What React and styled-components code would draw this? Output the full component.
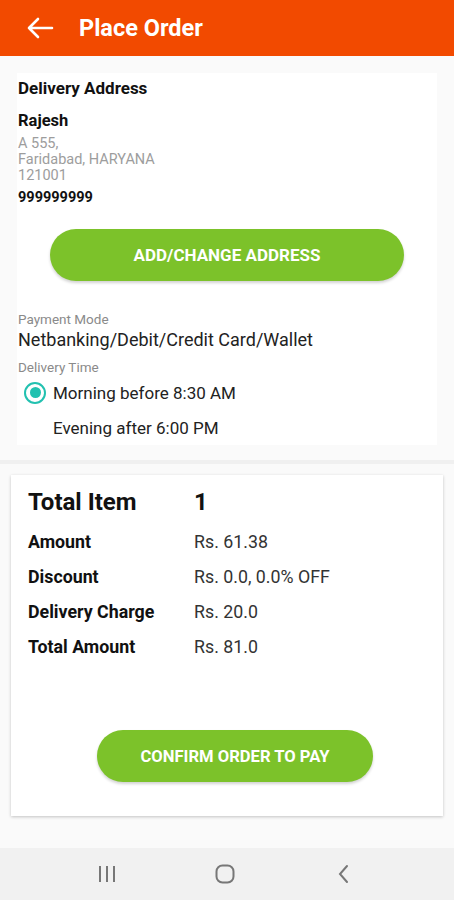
import styled, { createGlobalStyle } from "styled-components";

const Global = createGlobalStyle`
  html, body {
    margin: 0;
    padding: 0;
    background: #fafafa;
    font-family: Roboto, "Liberation Sans", sans-serif;
  }
  * { box-sizing: border-box; }
`;

const Screen = styled.div`
  width: 454px;
  height: 900px;
  display: flex;
  flex-direction: column;
  background: #fafafa;
  overflow: hidden;
`;

const Header = styled.div`
  height: 56px;
  flex-shrink: 0;
  background: #f24a00;
  display: flex;
  align-items: center;
  padding-left: 26px;
  gap: 25px;

  h1 {
    margin: 0;
    color: #fff;
    font-size: 23.5px;
    font-weight: 700;
  }
`;

const AddressSection = styled.div`
  padding: 17px 17px 15px 17px;
  background: #fafafa;
`;

const AddressCard = styled.div`
  background: #fff;
  height: 372px;
  padding: 5px 1px 0 1px;
  display: flex;
  flex-direction: column;
`;

const Heading = styled.div`
  font-size: 17px;
  font-weight: 700;
  color: #111;
  line-height: 20px;
`;

const Name = styled.div`
  font-size: 16.5px;
  font-weight: 700;
  color: #111;
  margin-top: 13px;
  line-height: 20px;
`;

const AddressLines = styled.div`
  margin-top: 5px;
  font-size: 14.5px;
  color: #9d9d9d;
  line-height: 16px;
`;

const Phone = styled.div`
  font-size: 14.5px;
  font-weight: 700;
  color: #111;
  line-height: 18px;
  margin-top: 5px;
`;

const PillButton = styled.button`
  display: block;
  flex-shrink: 0;
  align-self: center;
  width: ${(p) => p.$width}px;
  height: 52px;
  border: none;
  border-radius: 26px;
  background: #7cc22a;
  color: #fff;
  font-family: Roboto, "Liberation Sans", sans-serif;
  font-size: ${(p) => p.$size}px;
  font-weight: 700;
  box-shadow: 0 2px 3px rgba(0, 0, 0, 0.18);
  margin: ${(p) => p.$margin};
`;

const SmallLabel = styled.div`
  font-size: 13.5px;
  color: #8a8a8a;
  line-height: 16px;
  margin-top: ${(p) => p.$top || 0}px;
`;

const PaymentValue = styled.div`
  font-size: 18px;
  color: #222;
  line-height: 22px;
  margin-top: 2px;
`;

const RadioRow = styled.div`
  display: flex;
  align-items: center;
  height: 36px;
  padding-left: 6px;
  gap: 7px;
  font-size: 17px;
  color: #222;
`;

const Radio = styled.span`
  width: 22px;
  height: 22px;
  border-radius: 50%;
  border: 2.5px solid ${(p) => (p.$checked ? "#22c1b0" : "transparent")};
  display: flex;
  align-items: center;
  justify-content: center;

  &::after {
    content: "";
    width: 11px;
    height: 11px;
    border-radius: 50%;
    background: ${(p) => (p.$checked ? "#22c1b0" : "transparent")};
  }
`;

const Divider = styled.div`
  height: 4px;
  background: #f0f0f0;
`;

const SummarySection = styled.div`
  padding: 11px 11px 0 11px;
  background: #fafafa;
`;

const SummaryCard = styled.div`
  background: #fff;
  height: 341px;
  box-shadow: 0 1px 3px rgba(0, 0, 0, 0.22);
  padding: 13px 17px 0 17px;
  display: flex;
  flex-direction: column;
`;

const Row = styled.div`
  display: grid;
  grid-template-columns: 166px 1fr;
  align-items: center;
  height: ${(p) => (p.$big ? 28 : 35)}px;
  margin-bottom: ${(p) => (p.$big ? 8 : 0)}px;
  font-size: ${(p) => (p.$big ? 24 : 17.8)}px;

  span:first-child {
    font-weight: 700;
    color: #111;
  }
  span:last-child {
    color: ${(p) => (p.$big ? "#111" : "#333")};
    font-weight: ${(p) => (p.$big ? 700 : 400)};
  }
`;

const NavBar = styled.div`
  margin-top: auto;
  height: 52px;
  background: #f1f1f1;
  display: flex;
  align-items: center;
  justify-content: center;
  gap: 78px;
  padding-right: 4px;
`;

const NavIcon = styled.div`
  width: 40px;
  display: flex;
  justify-content: center;
`;

const BackArrow = () => (
  <svg width="28" height="22" viewBox="0 0 28 22" fill="none">
    <path d="M26 11H3M12 2L3 11l9 9" stroke="#fff" strokeWidth="2.6" strokeLinecap="round" strokeLinejoin="round" />
  </svg>
);

const rows = [
  ["Amount", "Rs. 61.38"],
  ["Discount", "Rs. 0.0, 0.0% OFF"],
  ["Delivery Charge", "Rs. 20.0"],
  ["Total Amount", "Rs. 81.0"],
];

export default function App() {
  return (
    <Screen>
      <Global />
      <Header>
        <BackArrow />
        <h1>Place Order</h1>
      </Header>

      <AddressSection>
        <AddressCard>
          <Heading>Delivery Address</Heading>
          <Name>Rajesh</Name>
          <AddressLines>
            <div>A 555,</div>
            <div>Faridabad, HARYANA</div>
            <div>121001</div>
          </AddressLines>
          <Phone>999999999</Phone>
          <PillButton $width={354} $size={17} $margin="22px 0 0 0">ADD/CHANGE ADDRESS</PillButton>
          <SmallLabel $top={30}>Payment Mode</SmallLabel>
          <PaymentValue>Netbanking/Debit/Credit Card/Wallet</PaymentValue>
          <SmallLabel $top={8}>Delivery Time</SmallLabel>
          <RadioRow>
            <Radio $checked />
            Morning before 8:30 AM
          </RadioRow>
          <RadioRow>
            <Radio />
            Evening after 6:00 PM
          </RadioRow>
        </AddressCard>
      </AddressSection>

      <Divider />

      <SummarySection>
        <SummaryCard>
          <Row $big>
            <span>Total Item</span>
            <span>1</span>
          </Row>
          {rows.map(([label, value]) => (
            <Row key={label}>
              <span>{label}</span>
              <span>{value}</span>
            </Row>
          ))}
          <PillButton $width={276} $size={16.6} $margin="66px 0 0 16px">CONFIRM ORDER TO PAY</PillButton>
        </SummaryCard>
      </SummarySection>

      <NavBar>
        <NavIcon>
          <svg width="20" height="18" viewBox="0 0 20 18">
            <path d="M3 1v16M10 1v16M17 1v16" stroke="#777" strokeWidth="2" />
          </svg>
        </NavIcon>
        <NavIcon>
          <svg width="20" height="20" viewBox="0 0 20 20">
            <rect x="1.5" y="1.5" width="17" height="17" rx="6" fill="none" stroke="#777" strokeWidth="2" />
          </svg>
        </NavIcon>
        <NavIcon>
          <svg width="14" height="20" viewBox="0 0 14 20">
            <path d="M11 2L4 10l7 8" fill="none" stroke="#777" strokeWidth="2" strokeLinecap="round" />
          </svg>
        </NavIcon>
      </NavBar>
    </Screen>
  );
}
